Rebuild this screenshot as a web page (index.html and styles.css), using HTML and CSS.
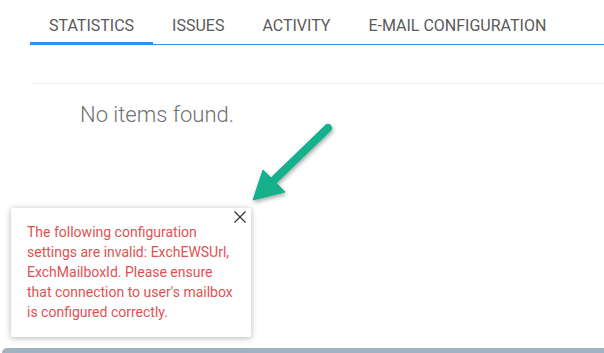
FILE: index.html
```html
<!DOCTYPE html>
<html>
<head>
<meta charset="utf-8">
<link rel="stylesheet" href="styles.css">
</head>
<body>
<div class="page">
  <nav class="tabs">
    <a class="tab active">STATISTICS</a>
    <a class="tab">ISSUES</a>
    <a class="tab">ACTIVITY</a>
    <a class="tab">E-MAIL CONFIGURATION</a>
    <span class="tab-rest"></span>
  </nav>
  <div class="content">
    <div class="divider"></div>
    <p class="empty">No items found.</p>
  </div>
  <div class="footer-bar"></div>

  <div class="toast">
    <button class="toast-close" aria-label="Close">
      <svg width="12" height="12" viewBox="0 0 12 12"><path d="M0.5 0.5L11.5 11.5M11.5 0.5L0.5 11.5" stroke="#333" stroke-width="1.2" fill="none"/></svg>
    </button>
    <p class="toast-text">The following configuration settings are invalid: ExchEWSUrl, ExchMailboxId. Please ensure that connection to user's mailbox is configured correctly.</p>
  </div>

  <svg class="arrow" width="120" height="110" viewBox="0 0 120 110">
    <defs>
      <filter id="sh" x="-30%" y="-30%" width="160%" height="160%">
        <feDropShadow dx="1" dy="2" stdDeviation="2" flood-color="#000" flood-opacity="0.35"/>
      </filter>
    </defs>
    <g filter="url(#sh)" fill="#12b08c" stroke="#12b08c">
      <line x1="98" y1="18" x2="42" y2="72" stroke-width="8" stroke-linecap="round"/>
      <polygon points="23,90 33,60 55,82" stroke-width="1" stroke-linejoin="round"/>
    </g>
  </svg>
</div>
</body>
</html>
```
FILE: styles.css
```css
html, body {
  margin: 0;
  padding: 0;
  background: #fff;
}
body {
  width: 604px;
  height: 353px;
  overflow: hidden;
  font-family: Roboto, "Liberation Sans", sans-serif;
}
.page {
  position: relative;
  height: 353px;
  display: flex;
  flex-direction: column;
}
.tabs {
  display: flex;
  align-items: stretch;
  padding-left: 30px;
  padding-top: 14px;
  height: 31px;
}
.tab {
  padding: 0 19px;
  font-size: 16px;
  line-height: 24px;
  color: #5a5a5a;
  border-bottom: 1px solid #3e8ee6;
}
.tab.active {
  border-bottom: 3px solid #2f8ff0;
  height: 28px;
}
.tab-rest {
  flex: 1;
  border-bottom: 1px solid #3e8ee6;
}
.content {
  flex: 1;
  padding-left: 31px;
  padding-top: 38px;
}
.divider {
  height: 1px;
  background: #ebebeb;
}
.empty {
  margin: 18px 0 0 49px;
  font-size: 22px;
  font-weight: 300;
  color: #707070;
}
.footer-bar {
  height: 5px;
  margin-left: 2px;
  background: #9fb4c0;
  border-top-left-radius: 5px;
}
.toast {
  position: absolute;
  left: 11px;
  top: 208px;
  width: 240px;
  height: 129px;
  box-sizing: border-box;
  background: #fff;
  border-radius: 2px;
  box-shadow: 0 1px 6px rgba(0,0,0,0.3);
  padding: 14px 16px 0 16px;
}
.toast-close {
  position: absolute;
  right: 5px;
  top: 3px;
  border: 0;
  background: none;
  padding: 0;
  width: 12px;
  height: 12px;
}
.toast-text {
  margin: 0;
  font-size: 14px;
  line-height: 20px;
  color: #e05252;
}
.arrow {
  position: absolute;
  left: 230px;
  top: 110px;
}
```
